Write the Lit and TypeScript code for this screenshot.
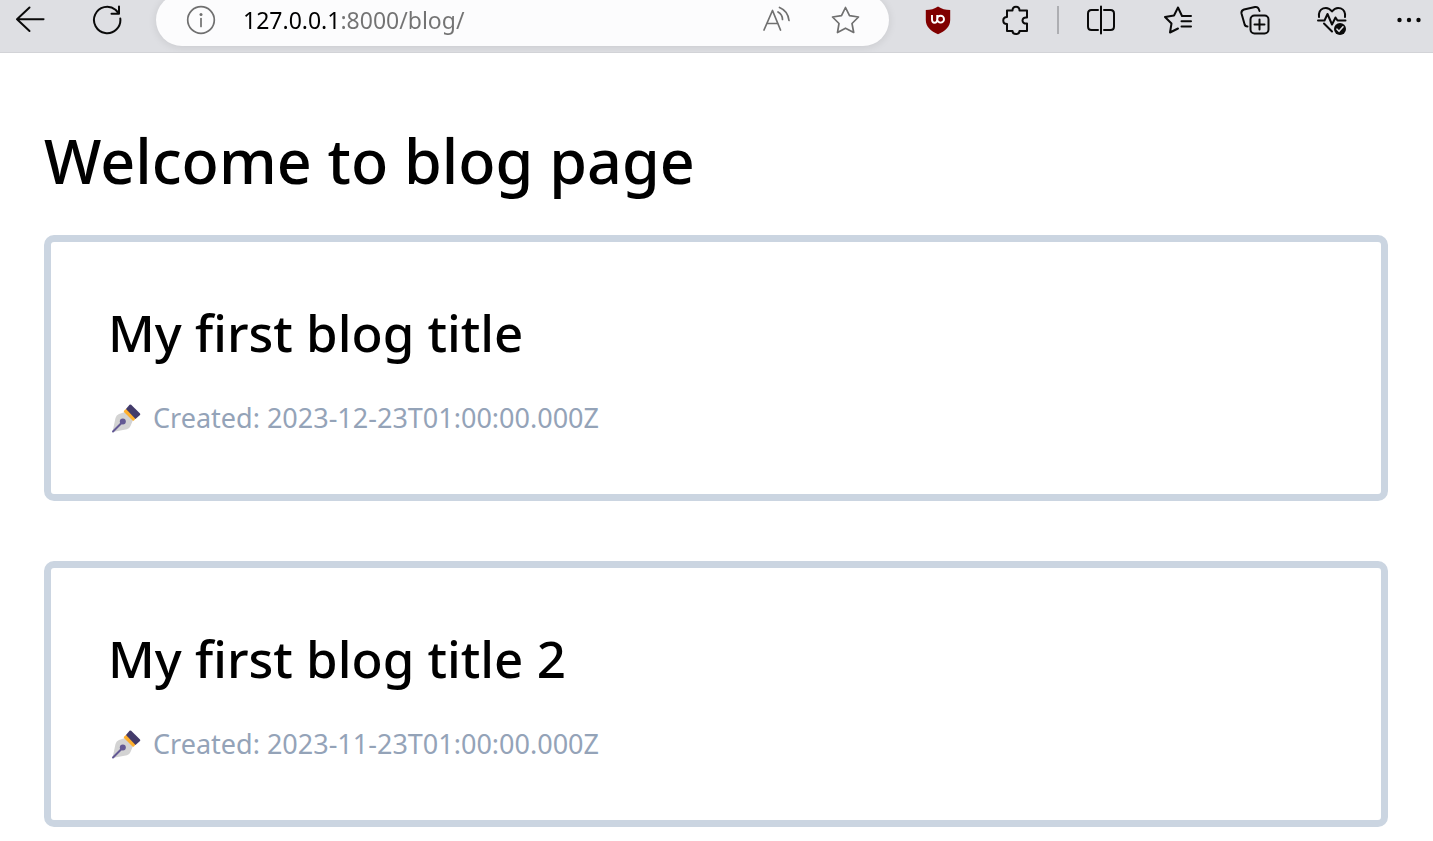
import { LitElement, html, css, svg } from "lit";
import { customElement, property } from "lit/decorators.js";

const icon = (body: unknown, cls = "icon") => html`
  <svg class=${cls} viewBox="0 0 30 30" width="30" height="30" aria-hidden="true">${body}</svg>
`;

const icons = {
  back: svg`<path d="M28.500 14.200H2M14.500 2.500L2 14.200L14.500 26" />`,
  reload: svg`<path d="M28.300 13.500A13.200 13.200 0 1 1 23.500 4.700L27 8.500M27 1.500V8.800H19.500" />`,
  info: svg`<circle cx="15" cy="15" r="13.300" /><path d="M15 13.500V21.500" /><circle class="solid" cx="15" cy="9.500" r="1.500" />`,
  read: svg`<path d="M2 25L10.500 5.500L18.500 25M5.300 18.500H16M16 7Q20.500 9.500 20.500 14.500M17.500 2.500Q26 6 27 15.500" />`,
  star: svg`<path d="M14.500 2.500L18.500 10.700L27.500 12L21 18.500L22.700 27.500L14.500 23.200L6.500 27.500L8 18.500L1.500 12L10.500 10.700Z" />`,
  puzzle: svg`<path d="M6 5.500H11.500C11.500 0.500 18.500 0.500 18.500 5.500H26V12.500C20 11.500 20 19.500 26 18.500V26H18.500C18.500 30 11.500 30 11.500 26H6V19C1 19 1 12 6 12Z" />`,
  split: svg`<path d="M12 5H5.500Q2 5 2 8.500V21.500Q2 25 5.500 25H12M18 5H24.500Q28 5 28 8.500V21.500Q28 25 24.500 25H18M15 1.500V28.500" />`,
  favorites: svg`<path d="M28 11H19L15 2.500L11 10.500L2 12L8.500 18.500L7 27.500L15 23.500M18.500 16.300H28M18.500 21.500H28" />`,
  collections: svg`<rect x="10.500" y="10.500" width="18" height="18" rx="4" /><path d="M19.500 14.500V24.500M14.500 19.500H24.500M19.500 6L18.500 3.500Q17.500 1.500 15 2L4 4.500Q1 5.500 1.500 8.500L4.500 19Q5 21.500 7.500 21.500" />`,
  heart: svg`<path d="M2 12C1 3 10 0 15 6.500C20 0 29 3 28 12M1 15.500H7.500L10.500 9L15 19.500L18.500 12.500L20.500 15.500H28.500M7 18.500L15 26.500" /><circle class="solid" cx="23" cy="24" r="6" /><path class="tick" d="M20 24.200L22 26.300L26 21.800" />`,
  more: svg`<circle class="solid" cx="5.500" cy="15" r="2.200" /><circle class="solid" cx="15" cy="15" r="2.200" /><circle class="solid" cx="24.500" cy="15" r="2.200" />`,
};

const shield = svg`
  <path fill="#800000" d="M15 1.500C11.500 4 7.500 5 2.800 5V15C2.800 22 8 26 15 29.300C22 26 27.200 22 27.200 15V5C22.500 5 18.500 4 15 1.500Z" />
  <path fill="none" stroke="#fff" stroke-width="1.900" d="M9 10V14.500Q9 17.700 11.500 17.700Q14.200 17.700 14.200 14.500V10M14.200 14.200A3.400 3.400 0 1 0 21 14.200A3.400 3.400 0 1 0 14.200 14.200" />
`;

@customElement("browser-bar")
export class BrowserBar extends LitElement {
  static styles = css`
    :host {
      display: block;
      font-family: "Noto Sans", "Open Sans", sans-serif;
    }
    .bar {
      display: flex;
      align-items: center;
      height: 40px;
      padding: 0 9px 12px 15px;
      background: #dedfe3;
      border-bottom: 1px solid #d2d3d7;
      overflow: hidden;
    }
    .group {
      display: flex;
      align-items: center;
      gap: 47px;
    }
    .tools {
      gap: 48px;
    }
    .button {
      display: block;
      flex: none;
      width: 30px;
      height: 30px;
      padding: 0;
      border: 0;
      background: none;
      color: #0a0a0a;
    }
    .quiet {
      color: #707070;
    }
    .icon {
      display: block;
      fill: none;
      stroke: currentColor;
      stroke-width: 2;
      stroke-linecap: round;
      stroke-linejoin: round;
    }
    .quiet .icon {
      stroke-width: 1.700;
    }
    .badge {
      display: block;
    }
    .icon .solid {
      fill: currentColor;
      stroke: none;
    }
    .tick {
      stroke: #dedfe3;
      stroke-width: 1.600;
    }
    .address {
      display: flex;
      flex: 1;
      align-items: center;
      box-sizing: border-box;
      min-width: 0;
      height: 52px;
      margin: 0 34px;
      padding: 0 28px 0 30px;
      border-radius: 26px;
      background: #fcfcfd;
      box-shadow: 0 1px 8px rgb(0 0 0 / 10%);
    }
    .url {
      flex: 1;
      min-width: 0;
      height: 36px;
      margin: 0 27px;
      padding: 0;
      border: 0;
      outline: 0;
      font: 23px/36px "Noto Sans", "Open Sans", sans-serif;
      color: transparent;
      background: linear-gradient(90deg, #000 96px, #737373 96px);
      -webkit-background-clip: text;
      background-clip: text;
    }
    .address .group {
      gap: 39px;
    }
    .divider {
      flex: none;
      width: 2px;
      height: 28px;
      margin: 0 27px 0 26px;
      background: #adaeb2;
    }
  `;

  private button(label: string, body: unknown, quiet = false) {
    return html`<button class="button ${quiet ? "quiet" : ""}" type="button" aria-label=${label}>${icon(body)}</button>`;
  }

  render() {
    return html`
      <header class="bar">
        <div class="group">${this.button("Back", icons.back)}${this.button("Refresh", icons.reload)}</div>
        <div class="address">
          ${this.button("Site information", icons.info, true)}
          <input class="url" type="text" aria-label="Address" spellcheck="false" value="127.0.0.1:8000/blog/" />
          <div class="group">
            ${this.button("Read aloud", icons.read, true)}${this.button("Add to favorites", icons.star, true)}
          </div>
        </div>
        <div class="group tools">
          <button class="button" type="button" aria-label="uBlock Origin">${icon(shield, "badge")}</button>
          ${this.button("Extensions", icons.puzzle)}
        </div>
        <div class="divider"></div>
        <div class="group">
          ${this.button("Split screen", icons.split)}${this.button("Favorites", icons.favorites)}
          ${this.button("Collections", icons.collections)}${this.button("Browser essentials", icons.heart)}
          ${this.button("Settings and more", icons.more)}
        </div>
      </header>
    `;
  }
}

@customElement("blog-card")
export class BlogCard extends LitElement {
  @property() heading = "";
  @property() created = "";

  static styles = css`
    :host {
      display: block;
    }
    .card {
      padding: 56px 57px;
      border: 7px solid #cbd5e1;
      border-radius: 10px;
    }
    .title {
      margin: 0;
      font-size: 51px;
      line-height: 68px;
      font-weight: 500;
      color: #000;
    }
    .meta {
      display: flex;
      align-items: center;
      gap: 9px;
      margin: 32px 0 0;
      font-size: 27px;
      line-height: 40px;
      color: #94a3b8;
    }
    .pen {
      flex: none;
      width: 36px;
      height: 36px;
    }
  `;

  render() {
    return html`
      <article class="card">
        <h2 class="title">${this.heading}</h2>
        <p class="meta">
          <svg class="pen" viewBox="0 0 36 36" aria-hidden="true">
            <path fill="#d3d3d3" d="M4.500 32L7.500 18Q8.300 15 11 14L17 12L25 20L22.500 26Q21.500 28.500 19 29.300Z" />
            <path fill="#ffb02e" d="M18.500 8.500L28 18L26 20.500Q25.300 21 24.600 20.500L16 12Q15.500 11.300 16 10.700Z" />
            <path fill="#433b6b" d="M18 9L21.500 4.800Q22.300 4 23.200 4.800L32 13.500Q32.600 14.300 32 15L27.500 19Z" />
            <path stroke="#635994" stroke-width="2" stroke-linecap="round" d="M5 31.500L15 21.500" />
            <circle fill="#635994" cx="14.800" cy="21.600" r="3" />
          </svg>
          <span>Created: ${this.created}</span>
        </p>
      </article>
    `;
  }
}

@customElement("app-root")
export class AppRoot extends LitElement {
  static styles = css`
    :host {
      display: block;
      min-height: 100vh;
      background: #fff;
      font-family: "Noto Sans", "Open Sans", sans-serif;
    }
    .page {
      padding: 64px 45px 14px 44px;
    }
    .heading {
      margin: 0 0 30px;
      font-size: 61px;
      line-height: 88px;
      font-weight: 500;
      color: #000;
    }
    .list {
      display: grid;
      gap: 60px;
    }
  `;

  private posts = [
    { title: "My first blog title", created: "2023-12-23T01:00:00.000Z" },
    { title: "My first blog title 2", created: "2023-11-23T01:00:00.000Z" },
  ];

  render() {
    return html`
      <browser-bar></browser-bar>
      <main class="page">
        <h1 class="heading">Welcome to blog page</h1>
        <div class="list">
          ${this.posts.map((p) => html`<blog-card .heading=${p.title} .created=${p.created}></blog-card>`)}
        </div>
      </main>
    `;
  }
}
